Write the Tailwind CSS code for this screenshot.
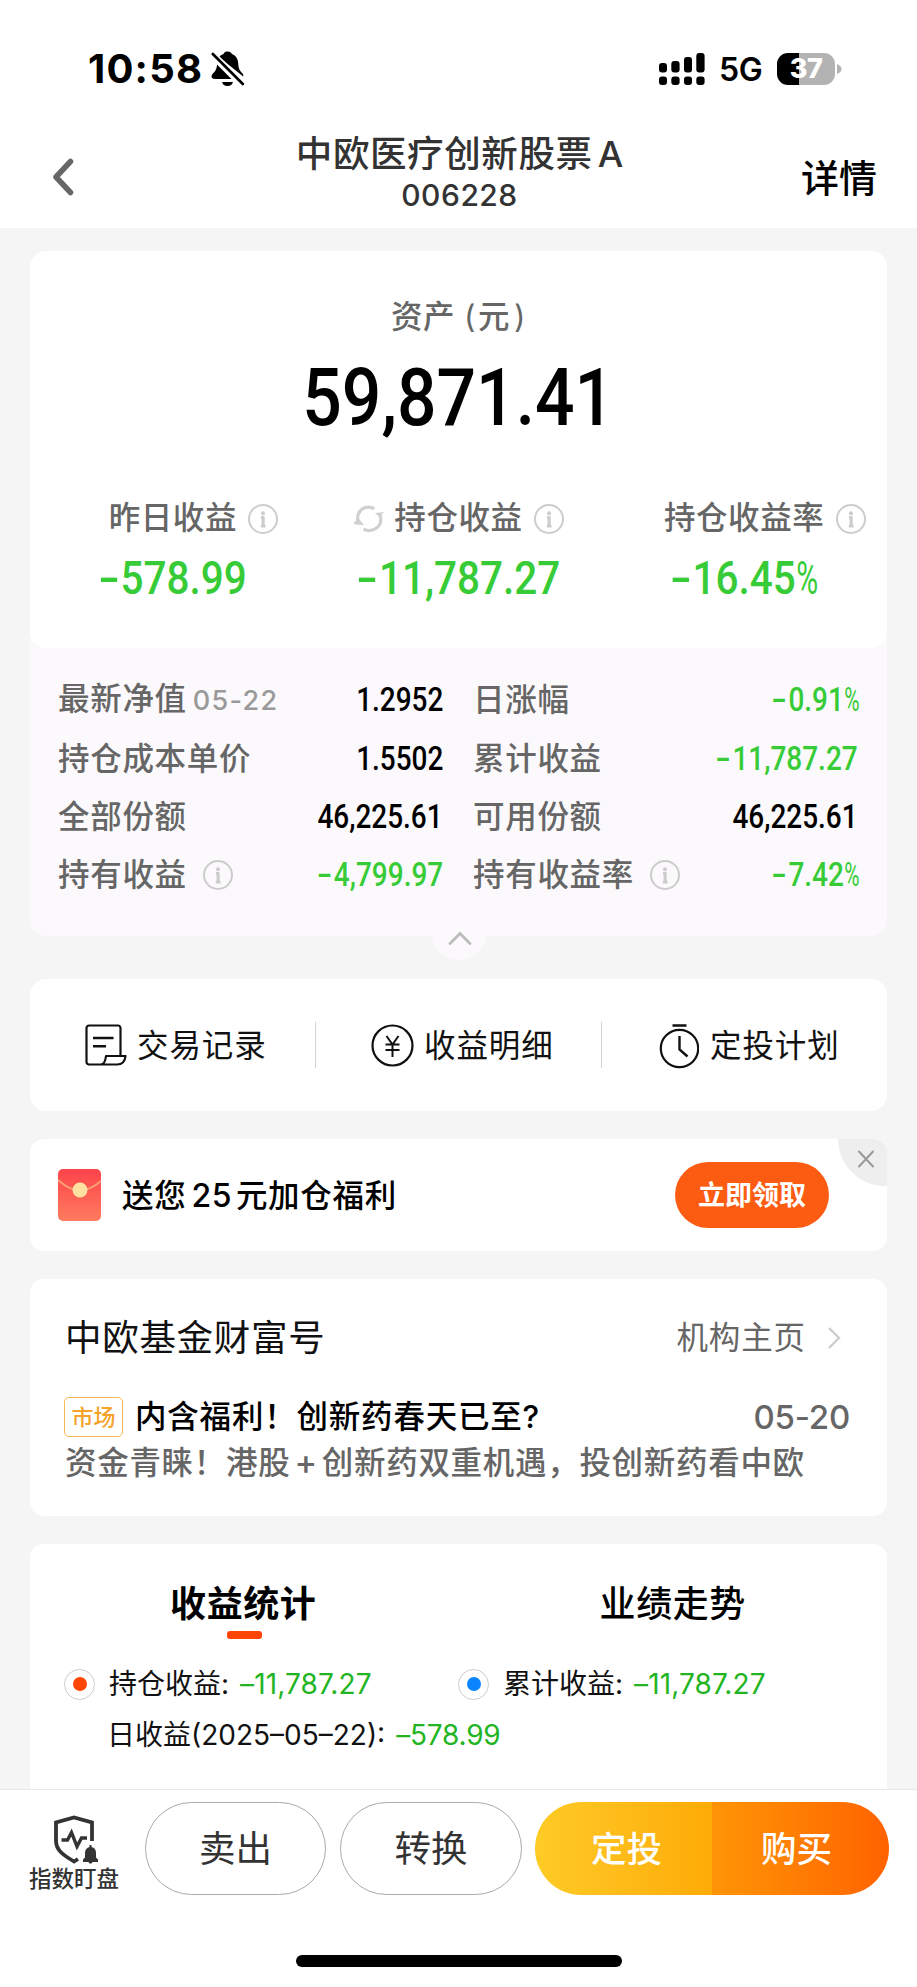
<!DOCTYPE html>
<html lang="zh-CN">
<head>
<meta charset="utf-8">
<title>中欧医疗创新股票A</title>
<script src="https://cdn.jsdelivr.net/npm/@tailwindcss/browser@4"></script>
</head>
<body class="w-[917px] h-[1987px] overflow-hidden bg-[#f5f5f5] font-['Inter','Noto_Sans_CJK_SC',sans-serif] text-black whitespace-nowrap">
<svg class="hidden">
  <symbol id="info" viewBox="0 0 30 30"><circle cx="15" cy="15" r="14" fill="none" stroke="#ccc" stroke-width="2"/><circle cx="15" cy="9.2" r="2" fill="#ccc"/><path d="M13 13.500h2v8.700M12.800 22.200h4.700M15.300 13v9.500" fill="none" stroke="#ccc" stroke-width="2.800"/></symbol>
</svg>
<div class="flex h-[1987px] flex-col">

  <header class="h-[228px] shrink-0 bg-white">
    <div class="flex h-[138px] items-center pl-[88px] pr-[75px]">
      <span class="w-[115px] text-[40px] leading-[40px] font-bold tracking-[1.200px]">10:58</span>
      <svg class="ml-[8px] h-[36px] w-[34px]" viewBox="0 0 34 36"><path d="M8 6C10 4 11 3.500 12.500 3c1-2 2-2.500 4-2.500s3.500.8 4.500 2.500c4 1.500 6 5 6.300 10 .3 5 1.500 6.500 4.200 9.500.8 1 1 2 .7 3zM6 13.500 20.500 28H4c-3.500 0-4.500-2.500-2.500-5C4 20.500 5.800 18.500 6 13.500zM11 31h11c-1 3-3 4-5.500 4S12 34 11 31z"/><path d="M1.500 2.500 32 33" stroke="#fff" stroke-width="6"/><path d="M1.800 3 31.800 33" stroke="#000" stroke-width="2.600" stroke-linecap="round"/></svg>
      <span class="flex-1"></span>
      <svg class="h-[32px] w-[46px]" viewBox="0 0 46 32"><rect y="10" width="8" height="9.500" rx="3"/><rect x="12.300" y="8" width="8.300" height="11.500" rx="3"/><rect x="25" y="4" width="8" height="15.500" rx="3"/><rect x="37.300" width="8.300" height="19.500" rx="3"/><rect y="23.500" width="8" height="8.500" rx="3"/><rect x="12.300" y="23.500" width="8.300" height="8.500" rx="3"/><rect x="25" y="23.500" width="8" height="8.500" rx="3"/><rect x="37.300" y="23.500" width="8.300" height="8.500" rx="3"/></svg>
      <span class="ml-[14px] mt-[2px] w-[43px] text-[32px] leading-[36px] font-semibold tracking-[-0.300px]">5G</span>
      <span class="ml-[15px] flex h-[32px] w-[58px] items-center justify-center rounded-[11px] bg-linear-to-r from-black from-38% to-[#b3b3b3] to-38% text-[27px] font-extrabold tracking-[-0.500px] text-white">37</span>
      <svg class="ml-[2px] h-[10px] w-[5px]" viewBox="0 0 5 10"><path d="M0 0C6 2 6 8 0 10z" fill="#b3b3b3"/></svg>
    </div>
    <div class="flex h-[90px] items-start pl-[52px] pr-[40px]">
      <svg class="mt-[20px] h-[38px] w-[22px]" viewBox="0 0 22 38"><path d="M18.500 3.500 4 19 18.500 34.500" fill="none" stroke="#666" stroke-width="5.500" stroke-linecap="round" stroke-linejoin="round"/></svg>
      <div class="flex flex-1 flex-col items-center pl-[44px] text-[#333]">
        <div class="-mt-[6px] h-[44px] text-[36.500px] leading-[44px] font-medium tracking-[0.600px]">中欧医疗创新股票<span class="ml-[5px] tracking-normal text-[36px]">A</span></div>
        <div class="mt-[1px] text-[30px] leading-[36px] font-medium tracking-[0.500px]">006228</div>
      </div>
      <div class="mt-[18px] text-[38px] leading-[44px] font-medium">详情</div>
    </div>
  </header>

  <main class="flex h-[1561px] shrink-0 flex-col overflow-hidden px-[30px] pt-[23px]">
    <section class="relative h-[685px] shrink-0 rounded-[16px] bg-[#fbf9fb]">
      <div class="flex h-[397px] flex-col items-center rounded-[16px] bg-white pt-[46px]">
        <div class="h-[40px] text-[31.500px] leading-[40px] font-medium tracking-[0.500px] text-[#666]">资产<span class="ml-[9px] mr-[2px] font-normal">(</span>元<span class="ml-[4px] font-normal">)</span></div>
        <div class="mt-[21px] h-[80px] scale-x-[0.87] font-['Roboto',sans-serif] text-[80px] leading-[80px] font-medium">59,871.41</div>
        <div class="mt-[58px] grid w-full grid-cols-3 text-center">
          <div><span class="relative inline-block text-[31.500px] leading-[44px] font-medium tracking-[0.600px] text-[#666]">昨日收益<svg class="absolute top-[8px] -right-[41px] size-[30px]"><use href="#info"/></svg></span></div>
          <div><span class="relative inline-block text-[31.500px] leading-[44px] font-medium tracking-[0.600px] text-[#666]"><svg class="absolute top-[8px] -left-[41px] h-[30px] w-[32px]" viewBox="0 0 32 30" fill="none" stroke="#d0d0d0" stroke-width="3.200"><path d="M5 17C3 9 9 2.500 17 3.300c1.500.2 3 .7 4.300 1.500M27 11c3 9-3 16-12.500 15.500-1.500-.2-2.500-.6-4-1.500"/><path d="M.5 18.500 6 15l5 6-9-.5zM22 9l9-1-4.500 5z" fill="#d0d0d0" stroke="none"/></svg>持仓收益<svg class="absolute top-[8px] -right-[41px] size-[30px]"><use href="#info"/></svg></span></div>
          <div><span class="relative inline-block text-[31.500px] leading-[44px] font-medium tracking-[0.600px] text-[#666]">持仓收益率<svg class="absolute top-[8px] -right-[42px] size-[30px]"><use href="#info"/></svg></span></div>
        </div>
        <div class="mt-[13px] grid w-full grid-cols-3 text-center font-['Roboto',sans-serif] text-[46.500px] leading-[50px] font-medium text-[#37cc37]">
          <div class="scale-x-[0.87]"><span class="ml-[8px] mr-[1px] inline-block origin-right scale-x-[1.550]">-</span>578.99</div>
          <div class="scale-x-[0.87]"><span class="ml-[8px] mr-[1px] inline-block origin-right scale-x-[1.550]">-</span>11,787.27</div>
          <div class="scale-x-[0.87]"><span class="ml-[8px] mr-[1px] inline-block origin-right scale-x-[1.550]">-</span>16.45<span class="-mr-[10px] inline-block origin-left scale-x-[0.740] font-normal">%</span></div>
        </div>
      </div>
      <div class="grid auto-rows-[58.400px] grid-cols-[385px_385px] gap-x-[30px] pl-[28px] pt-[23px] text-[31.500px] leading-[58px] font-medium tracking-[0.700px] text-[#666]">
        <div class="flex items-center justify-between"><span>最新净值<span class="ml-[6px] text-[27px] tracking-[1.300px] text-[#999]">05-22</span></span><span class="origin-right scale-x-[0.86] font-['Roboto',sans-serif] text-[32.500px] tracking-normal text-black">1.2952</span></div>
        <div class="flex items-center justify-between"><span>日涨幅</span><span class="origin-right scale-x-[0.86] font-['Roboto',sans-serif] text-[32.500px] tracking-normal text-[#37cc37]"><span class="mr-[2px] inline-block origin-right scale-x-[1.600]">-</span>0.91<span class="-mr-[7px] inline-block origin-left scale-x-[0.750] font-normal">%</span></span></div>
        <div class="flex items-center justify-between"><span>持仓成本单价</span><span class="origin-right scale-x-[0.86] font-['Roboto',sans-serif] text-[32.500px] tracking-normal text-black">1.5502</span></div>
        <div class="flex items-center justify-between"><span>累计收益</span><span class="origin-right scale-x-[0.86] font-['Roboto',sans-serif] text-[32.500px] tracking-normal text-[#37cc37]"><span class="mr-[2px] inline-block origin-right scale-x-[1.600]">-</span>11,787.27</span></div>
        <div class="flex items-center justify-between"><span>全部份额</span><span class="origin-right scale-x-[0.86] font-['Roboto',sans-serif] text-[32.500px] tracking-normal text-black">46,225.61</span></div>
        <div class="flex items-center justify-between"><span>可用份额</span><span class="origin-right scale-x-[0.86] font-['Roboto',sans-serif] text-[32.500px] tracking-normal text-black">46,225.61</span></div>
        <div class="flex items-center"><span>持有收益</span><svg class="ml-[16px] size-[30px]"><use href="#info"/></svg><span class="ml-auto origin-right scale-x-[0.86] font-['Roboto',sans-serif] text-[32.500px] tracking-normal text-[#37cc37]"><span class="mr-[2px] inline-block origin-right scale-x-[1.600]">-</span>4,799.97</span></div>
        <div class="flex items-center"><span>持有收益率</span><svg class="ml-[16px] size-[30px]"><use href="#info"/></svg><span class="ml-auto origin-right scale-x-[0.86] font-['Roboto',sans-serif] text-[32.500px] tracking-normal text-[#37cc37]"><span class="mr-[2px] inline-block origin-right scale-x-[1.600]">-</span>7.42<span class="-mr-[7px] inline-block origin-left scale-x-[0.750] font-normal">%</span></span></div>
      </div>
      <div class="absolute -bottom-[24px] left-[401px] flex size-[56px] items-center justify-center rounded-full bg-[#fbf9fb]">
        <svg class="ml-[2px] mt-[12px] h-[16px] w-[26px]" viewBox="0 0 26 16"><path d="M3 13.500 13 3.500 23 13.500" fill="none" stroke="#bbb" stroke-width="2.800" stroke-linecap="round"/></svg>
      </div>
    </section>

    <section class="mt-[43px] flex h-[132px] shrink-0 items-center rounded-[16px] bg-white text-[31.500px] leading-[44px] tracking-[0.900px] text-[#111]">
      <div class="flex w-[285px] items-center pl-[55px]"><svg class="h-[42px] w-[42px]" viewBox="0 0 42 42" fill="none" stroke="#111" stroke-width="2.200" stroke-linejoin="round"><path d="M35.500 31V4a2.500 2.500 0 0 0-2.500-2.500H4A2.500 2.500 0 0 0 1.500 4v34A2.500 2.500 0 0 0 4 40.500h28c5 0 8-3 8.500-8.500H21c-.5 5-2 8.500-5.500 8.500"/><path d="M8 14h20.500M8 22.300h13" stroke-width="2.400"/></svg><span class="ml-[10px] mt-[2px]">交易记录</span></div>
      <div class="h-[46px] w-px bg-[#d4d4d4]"></div>
      <div class="flex w-[285px] items-center pl-[55px]"><svg class="size-[43px]" viewBox="0 0 43 43" fill="none" stroke="#111" stroke-width="2.200"><circle cx="21.500" cy="21.500" r="20"/><path d="M15.500 12 21.500 20.500 27.500 12M21.500 20v13M14.500 20.500h14M14.500 26h14" stroke-width="2"/></svg><span class="ml-[10px] mt-[2px]">收益明细</span></div>
      <div class="h-[46px] w-px bg-[#d4d4d4]"></div>
      <div class="flex w-[285px] items-center pl-[57px]"><svg class="mt-[2px] h-[46px] w-[40px]" viewBox="0 0 40 46" fill="none" stroke="#111" stroke-width="2.200"><circle cx="20.500" cy="25.500" r="18.700"/><path d="M13.500 2.500h14M20.500 13v13.500l8 7" stroke-width="2.400"/></svg><span class="ml-[11px] mt-[2px]">定投计划</span></div>
    </section>

    <section class="relative mt-[28px] flex h-[112px] shrink-0 items-center overflow-hidden rounded-[14px] bg-white pl-[28px]">
      <svg class="h-[52px] w-[43px]" viewBox="0 0 43 52"><defs><linearGradient id="env" x2="0" y2="1"><stop stop-color="#fd434b"/><stop offset="1" stop-color="#ff7b5e"/></linearGradient></defs><rect width="43" height="52" rx="5" fill="url(#env)"/><path d="M0 11Q21.500 31 43 12" fill="none" stroke="#ffa073" stroke-width="2"/><circle cx="22" cy="21" r="7.500" fill="#ffe0a3"/></svg>
      <span class="ml-[21px] mt-[2px] text-[31.500px] leading-[44px] font-medium tracking-[0.700px]">送您<span class="ml-[5px] mr-[4px] text-[32px] font-medium tracking-[0.500px]">25</span>元加仓福利</span>
      <div class="ml-auto mr-[58px] flex h-[66px] w-[154px] items-center justify-center rounded-full bg-[#fb5c12] pt-[2px] text-[27px] font-bold text-white">立即领取</div>
      <div class="absolute top-0 right-0 flex h-[47px] w-[49px] items-center justify-center rounded-bl-[48px] bg-[#eee]"><svg class="-mt-[7px] ml-[6px] size-[18px]" viewBox="0 0 18 18"><path d="M2 1.500 16 16.500M16 1.500 2 16.500" stroke="#999" stroke-width="2" stroke-linecap="round"/></svg></div>
    </section>

    <section class="mt-[28px] h-[237px] shrink-0 rounded-[14px] bg-white pl-[34px] pr-[37px] pt-[35px]">
      <div class="flex h-[48px] items-center leading-[48px]">
        <span class="ml-[1px] text-[36.500px] tracking-[0.700px] text-[#111]">中欧基金财富号</span>
        <span class="ml-auto text-[31.500px] tracking-[0.900px] text-[#666]">机构主页</span>
        <svg class="ml-[21px] mr-[9px] h-[24px] w-[14px]" viewBox="0 0 14 24"><path d="M2 2 12 12 2 22" fill="none" stroke="#ccc" stroke-width="2.400"/></svg>
      </div>
      <div class="mt-[33px] flex h-[44px] items-center leading-[44px]">
        <span class="flex h-[40px] w-[59px] items-center justify-center rounded-[5px] border-[1.500px] border-[#f7b752] text-[22px] leading-[36px] font-medium text-[#f5a32a]">市场</span>
        <span class="ml-[12px] text-[31.500px] font-medium tracking-[0.800px]">内含福利！创新药春天已至?</span>
        <span class="ml-auto text-[33px] font-medium tracking-[-0.200px] text-[#666]">05-20</span>
      </div>
      <div class="ml-[1px] mt-[2px] text-[31.500px] leading-[44px] font-medium tracking-[0.700px] text-[#666]">资金青睐！港股<span class="mx-[4px] text-[34px] leading-[30px]">+</span>创新药双重机遇，投创新药看中欧</div>
    </section>

    <section class="mt-[28px] h-[260px] shrink-0 rounded-t-[14px] bg-white">
      <div class="grid h-[96px] grid-cols-2 pt-[37px] text-center text-[36px] leading-[46px] tracking-[0.600px]">
        <div class="flex flex-col items-center"><span class="pr-[2px] font-bold">收益统计</span><span class="mt-[4px] h-[8px] w-[35px] rounded-[3px] bg-[#ff4505]"></span></div>
        <div class="font-medium">业绩走势</div>
      </div>
      <div class="mt-[20px] grid h-[48px] grid-cols-[394px_1fr] pl-[34px] text-[28px] leading-[48px] text-[#111]">
        <div class="flex items-center">
          <span class="flex size-[31px] items-center justify-center rounded-full border border-[#ccc]"><span class="size-[14px] rounded-full bg-[#ff4505]"></span></span>
          <span class="ml-[14px]">持仓收益:</span><span class="ml-[11px] tracking-[0.100px] text-[#22b422]">–11,787.27</span>
        </div>
        <div class="flex items-center">
          <span class="flex size-[31px] items-center justify-center rounded-full border border-[#ccc]"><span class="size-[14px] rounded-full bg-[#0a84ff]"></span></span>
          <span class="ml-[14px]">累计收益:</span><span class="ml-[11px] tracking-[0.100px] text-[#22b422]">–11,787.27</span>
        </div>
      </div>
      <div class="mt-[3px] flex h-[48px] items-center pl-[77px] text-[28px] leading-[48px] text-[#111]"><span>日收益(2025–05–22):</span><span class="ml-[11px] tracking-[-0.200px] text-[#22b422]">–578.99</span></div>
    </section>
  </main>

  <footer class="flex flex-1 flex-col items-center border-t border-[#e8e8e8] bg-white">
    <div class="flex w-full items-start pt-[12px] text-[#333]">
      <div class="flex w-[145px] flex-col pl-[29px] pt-[13px]">
        <svg class="ml-[24px] h-[50px] w-[46px]" viewBox="0 0 46 50" fill="none" stroke="#333" stroke-width="3.800"><path d="M39 26V7.500L21 2.500 3 7.500V26c0 10 9 15 18 20.500l4-2.500"/><path d="M8.500 25h6l4-7.500 5.500 14 4.500-8.500h5.500" stroke-width="3.400"/><path d="M30 47v-2.500l2-2V38c0-3.500 2-5.500 4.500-6v-2h2v2c3 .5 4.500 2.500 4.500 6v4.500l2 2V47h-5.500c-.5 2-3.500 2-4 0z" fill="#333" stroke="none"/></svg>
        <span class="mt-[1px] text-[22.500px] leading-[26px] font-medium">指数盯盘</span>
      </div>
      <div class="flex h-[93px] w-[181px] items-center justify-center rounded-full border-[1.500px] border-[#aaa] pt-[2px] text-[36.500px]">卖出</div>
      <div class="ml-[14px] flex h-[93px] w-[182px] items-center justify-center rounded-full border-[1.500px] border-[#aaa] pt-[2px] text-[36.500px]">转换</div>
      <div class="ml-[13px] flex h-[93px] w-[354px] overflow-hidden rounded-full text-[35.500px] font-medium text-white">
        <div class="flex w-[177px] items-center justify-center bg-linear-to-r from-[#fecb25] to-[#feab05] pl-[6px] pt-[2px]">定投</div>
        <div class="flex w-[177px] items-center justify-center bg-linear-to-r from-[#ff9406] to-[#ff6200] pr-[8px] pt-[2px]">购买</div>
      </div>
    </div>
    <div class="mt-[60px] h-[12px] w-[326px] rounded-full bg-black"></div>
  </footer>
</div>
</body>
</html>
